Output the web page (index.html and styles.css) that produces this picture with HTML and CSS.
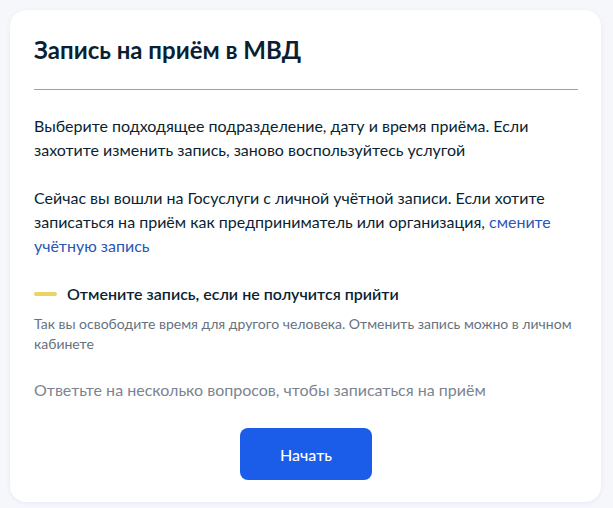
FILE: index.html
```html
<!DOCTYPE html>
<html lang="ru">
<head>
<meta charset="utf-8">
<title>Запись на приём в МВД</title>
<link rel="stylesheet" href="styles.css">
</head>
<body>
<main class="card">
  <h1 class="card__title">Запись на приём в МВД</h1>
  <hr class="card__divider">
  <p class="text">Выберите подходящее подразделение, дату и время приёма. Если захотите изменить запись, заново воспользуйтесь услугой</p>
  <p class="text text--gap">Сейчас вы вошли на Госуслуги с личной учётной записи. Если хотите записаться на приём как предприниматель или организация, <a class="link" href="#">смените учётную запись</a></p>
  <section class="notice">
    <div class="notice__head">
      <span class="notice__bar"></span>
      <span class="notice__title">Отмените запись, если не получится прийти</span>
    </div>
    <p class="notice__text">Так вы освободите время для другого человека. Отменить запись можно в личном кабинете</p>
  </section>
  <p class="hint">Ответьте на несколько вопросов, чтобы записаться на приём</p>
  <div class="actions">
    <button class="btn" type="button">Начать</button>
  </div>
</main>
</body>
</html>
```

FILE: styles.css
```css
* { box-sizing: border-box; }

html, body {
  margin: 0;
  height: 100%;
}

body {
  background: #f5f7fb;
  padding: 10px 12px 6px 10px;
  font-family: Lato, "Noto Sans", sans-serif;
  color: #0b1f33;
}

.card {
  background: #fff;
  border-radius: 16px;
  box-shadow: 0 1px 4px rgba(60, 80, 120, 0.08);
  padding: 24px 23px 23px 24px;
  height: 492px;
}

.card__title {
  margin: 0;
  font-size: 24px;
  line-height: 32px;
  font-weight: 700;
  letter-spacing: 0;
}

.card__divider {
  margin: 23px 0 24px;
  border: 0;
  border-top: 1px solid #9aa1ab;
}

.text {
  margin: 0;
  font-size: 16px;
  line-height: 24px;
}

.text--gap { margin-top: 24px; }

.link {
  color: #2a56b8;
  text-decoration: none;
}

.notice { margin-top: 24px; }

.notice__head {
  display: flex;
  align-items: center;
  gap: 10px;
  height: 24px;
}

.notice__bar {
  width: 23px;
  height: 4px;
  border-radius: 2px;
  background: #e9d465;
}

.notice__title {
  font-size: 16px;
  line-height: 24px;
  font-weight: 600;
}

.notice__text {
  margin: 8px 0 0;
  font-size: 14px;
  line-height: 20px;
  color: #66727f;
}

.hint {
  margin: 24px 0 0;
  font-size: 16px;
  line-height: 24px;
  color: #7b8490;
}

.actions {
  display: flex;
  justify-content: center;
  margin-top: 26px;
}

.btn {
  width: 132px;
  height: 52px;
  border: 0;
  border-radius: 8px;
  background: #1b5ce8;
  color: #fff;
  font-family: Lato, "Noto Sans", sans-serif;
  font-size: 16px;
  font-weight: 500;
  cursor: pointer;
}
```
